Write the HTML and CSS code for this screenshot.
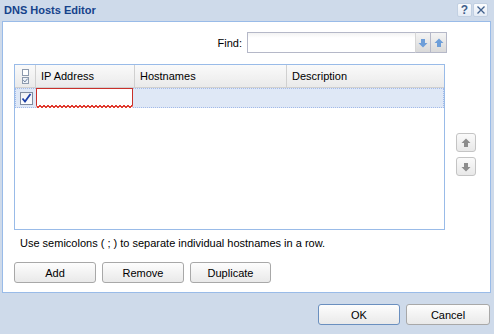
FILE: index.html
```html
<!DOCTYPE html>
<html lang="en">
    <head>
        <meta charset="utf-8">
        <title>DNS Hosts Editor</title>
        <link rel="stylesheet" href="styles.css">
    </head>
    <body>
        <div class="window">
            <div class="titlebar">
                <span class="title">DNS Hosts Editor</span>
                <div class="tools">
                    <button type="button" class="tool">?</button>
                    <button type="button" class="tool">
                        <svg width="10" height="10" viewBox="0 0 10 10"><path d="M1.5 1.5 L8.5 8.5 M8.5 1.5 L1.5 8.5" stroke="#3f5f8c" stroke-width="1.3" fill="none"/></svg>
                    </button>
                </div>
            </div>

            <div class="panel">
                <div class="findrow">
                    <label class="findlabel">Find:</label>
                    <div class="findfield">
                        <input type="text" class="findinput">
                        <button type="button" class="findbtn">
                            <svg width="10" height="10" viewBox="0 0 10 10"><path d="M3 1 H7 V5 H9.5 L5 9.5 L0.5 5 H3 Z" fill="#6d9ed9"/></svg>
                        </button>
                        <button type="button" class="findbtn">
                            <svg width="10" height="10" viewBox="0 0 10 10"><path d="M3 9 H7 V5 H9.5 L5 0.5 L0.5 5 H3 Z" fill="#6d9ed9"/></svg>
                        </button>
                    </div>
                </div>

                <div class="gridarea">
                    <div class="grid">
                        <div class="gridhead">
                            <div class="cell check">
                                <span class="minibox"></span>
                                <span class="minibox ticked">
                                    <svg width="5" height="5" viewBox="0 0 5 5"><path d="M0.3 2.2 L1.9 3.9 L4.7 0.6" stroke="#6b7f99" stroke-width="1" fill="none"/></svg>
                                </span>
                            </div>
                            <div class="cell ip">IP Address</div>
                            <div class="cell hosts">Hostnames</div>
                            <div class="cell desc">Description</div>
                        </div>
                        <div class="gridrow selected">
                            <div class="cell check">
                                <span class="rowbox">
                                    <svg width="11" height="11" viewBox="0 0 11 11"><path d="M1.5 5.5 L4 8.5 L9.5 1" stroke="#1c3fa8" stroke-width="1.8" fill="none"/></svg>
                                </span>
                            </div>
                            <div class="cell ip"><div class="editor"></div></div>
                            <div class="cell hosts"></div>
                            <div class="cell desc"></div>
                        </div>
                    </div>
                    <div class="sidebtns">
                        <button type="button" class="sidebtn">
                            <svg width="10" height="10" viewBox="0 0 10 10"><path d="M3 9 H7 V5 H9.5 L5 0.5 L0.5 5 H3 Z" fill="#8c8c8c"/></svg>
                        </button>
                        <button type="button" class="sidebtn">
                            <svg width="10" height="10" viewBox="0 0 10 10"><path d="M3 1 H7 V5 H9.5 L5 9.5 L0.5 5 H3 Z" fill="#8c8c8c"/></svg>
                        </button>
                    </div>
                </div>

                <p class="hint">Use semicolons ( ; ) to separate individual hostnames in a row.</p>

                <div class="actions">
                    <button type="button" class="btn">Add</button>
                    <button type="button" class="btn">Remove</button>
                    <button type="button" class="btn">Duplicate</button>
                </div>
            </div>

            <div class="footer">
                <button type="button" class="btn wide focused">OK</button>
                <button type="button" class="btn wide">Cancel</button>
            </div>
        </div>
    </body>
</html>
```

FILE: styles.css
```css
body {
    margin: 0;
    font-family: "Liberation Sans", Arial, sans-serif;
    font-size: 11px;
    color: #000;
    background: #cedaea;
}

.window {
    width: 494px;
    height: 334px;
    display: flex;
    flex-direction: column;
}

.titlebar {
    height: 21px;
    display: flex;
    align-items: center;
    justify-content: space-between;
    padding: 0 4px 0 4px;
}

.title {
    font-weight: bold;
    font-size: 11px;
    color: #15428b;
    margin-top: -2px;
}

.tools {
    display: flex;
    gap: 1px;
    margin-top: -2px;
    margin-right: 2px;
}

.tool {
    width: 15px;
    height: 14px;
    padding: 0;
    border: 1px solid #c2d0e2;
    border-radius: 2px;
    background: linear-gradient(#fbfcfe, #e4ebf5);
    display: flex;
    align-items: center;
    justify-content: center;
    font-family: "Liberation Sans", Arial, sans-serif;
    font-weight: bold;
    font-size: 12px;
    color: #3f5f8c;
}

.panel {
    margin: 0 3px 0 2px;
    height: 272px;
    box-sizing: border-box;
    background: #fff;
    border: 1px solid #99bbe8;
    padding: 10px 12px 0 11px;
    display: flex;
    flex-direction: column;
}

.findrow {
    display: flex;
    justify-content: flex-end;
    align-items: center;
    padding-right: 31px;
    height: 21px;
}

.findlabel {
    margin-right: 5px;
}

.findfield {
    display: flex;
    height: 21px;
}

.findinput {
    width: 168px;
    height: 21px;
    box-sizing: border-box;
    margin: 0;
    border: 1px solid #b5b8c8;
    border-right: none;
    background: linear-gradient(#f3f3f3, #fff 5px);
    outline: none;
}

.findbtn {
    width: 16px;
    height: 21px;
    padding: 0;
    margin: 0;
    border: 1px solid #b5b8c8;
    border-left: 1px solid #d6d6d6;
    background: linear-gradient(#f4f4f4, #d9d9d9);
    display: flex;
    align-items: center;
    justify-content: center;
}

.findbtn + .findbtn {
    border-left: none;
}

.gridarea {
    display: flex;
    margin-top: 11px;
}

.grid {
    width: 431px;
    height: 166px;
    box-sizing: border-box;
    border: 1px solid #99bbe8;
    background: #fff;
}

.gridhead {
    display: flex;
    height: 22px;
    background: linear-gradient(#fafafa, #eaeaea);
    border-bottom: 1px solid #d0d0d0;
}

.gridhead .cell {
    border-right: 1px solid #d0d0d0;
    display: flex;
    align-items: center;
    padding-left: 5px;
    box-sizing: border-box;
}

.gridhead .cell.desc {
    border-right: none;
}

.cell.check {
    width: 21px;
    flex: none;
}

.cell.ip {
    width: 99px;
    flex: none;
}

.cell.hosts {
    width: 152px;
    flex: none;
}

.cell.desc {
    flex: 1;
}

.gridhead .cell.check {
    flex-direction: column;
    justify-content: center;
    align-items: center;
    padding: 0;
    gap: 1px;
}

.minibox {
    width: 5px;
    height: 5px;
    border: 1px solid #8d9aad;
    background: #fff;
    display: flex;
    align-items: center;
    justify-content: center;
}

.minibox.ticked {
    background: #eef2f8;
}

.gridrow {
    display: flex;
    height: 20px;
    box-sizing: border-box;
}

.gridrow.selected {
    background: #dfe8f6;
    border: 1px dotted #a3bae9;
}

.gridrow .cell.check {
    width: 20px;
    display: flex;
    align-items: center;
    justify-content: center;
}

.rowbox {
    width: 13px;
    height: 13px;
    box-sizing: border-box;
    border: 1px solid #7f8ba0;
    background: linear-gradient(#eef0f4, #fff);
    display: flex;
    align-items: center;
    justify-content: center;
}

.gridrow .cell.ip {
    margin-top: -1px;
}

.editor {
    width: 97px;
    height: 20px;
    box-sizing: border-box;
    background: #fff;
    border: 1px solid #c9302a;
    border-bottom: 3px solid transparent;
    position: relative;
}

.editor::after {
    content: "";
    position: absolute;
    left: 0;
    right: 0;
    bottom: -3px;
    height: 3px;
    background:
        linear-gradient(135deg, transparent 33%, #e03a2e 33%, #e03a2e 66%, transparent 66%) 0 0 / 4px 3px repeat-x,
        linear-gradient(45deg, transparent 33%, #e03a2e 33%, #e03a2e 66%, transparent 66%) 2px 0 / 4px 3px repeat-x;
}

.sidebtns {
    display: flex;
    flex-direction: column;
    gap: 5px;
    margin-left: 11px;
    padding-top: 69px;
}

.sidebtn {
    width: 20px;
    height: 19px;
    padding: 0;
    border: 1px solid #c4c4c4;
    border-radius: 3px;
    background: linear-gradient(#fafafa, #e8e8e8);
    display: flex;
    align-items: center;
    justify-content: center;
}

.hint {
    margin: 7px 0 0 6px;
    line-height: 13px;
}

.actions {
    display: flex;
    gap: 6px;
    margin-top: 12px;
}

.btn {
    width: 82px;
    height: 21px;
    padding: 0;
    border: 1px solid #a8a8a8;
    border-radius: 3px;
    background: linear-gradient(#fdfdfd, #e9e9e9);
    font-family: "Liberation Sans", Arial, sans-serif;
    font-size: 11px;
    color: #000;
}

.actions .btn:nth-child(3) {
    width: 81px;
}

.footer {
    display: flex;
    justify-content: flex-end;
    gap: 6px;
    padding: 11px 4px 0 0;
}

.btn.wide + .btn.wide {
    width: 84px;
}

.btn.focused {
    border-color: #6a8fbf;
}
```
